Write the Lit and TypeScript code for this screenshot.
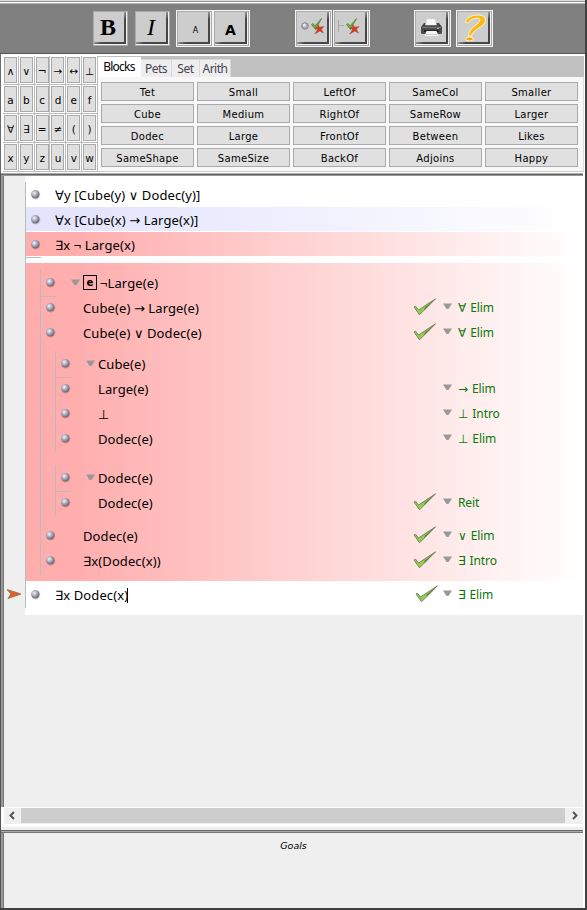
import { LitElement, html, css, svg, nothing } from "lit";
import { customElement, property } from "lit/decorators.js";
import { classMap } from "lit/directives/class-map.js";

type Step = {
  text: string;
  rule?: string;
  ok?: boolean;
  tint?: string;
  boxed?: string;
  fold?: boolean;
  caret?: boolean;
};

const SYMBOLS = ["∧", "∨", "¬", "→", "↔", "⊥", "a", "b", "c", "d", "e", "f", "∀", "∃", "=", "≠", "(", ")", "x", "y", "z", "u", "v", "w"];
const PREDICATES = [
  "Tet", "Small", "LeftOf", "SameCol", "Smaller",
  "Cube", "Medium", "RightOf", "SameRow", "Larger",
  "Dodec", "Large", "FrontOf", "Between", "Likes",
  "SameShape", "SameSize", "BackOf", "Adjoins", "Happy",
];

const verdict = svg`
  <path d="M14.500 12.500l1.500-1 2 2.500 6.500-7.500-6 11z" fill="#6cb832" stroke="#57803f" stroke-width=".8"/>
  <path d="M20.500 12.500l2.300 2.700 4.200-.7-2.600 2.800 2 3.700-3.600-2-5 3 2.700-4.300-2.500-2 3-.2z" fill="#d8371c" stroke="#9b4a3c" stroke-width=".5"/>`;

@customElement("tool-button")
class ToolButton extends LitElement {
  @property() icon = "";
  @property({ type: Boolean, reflect: true }) framed = false;
  static styles = css`
    :host { display: block; box-sizing: border-box; width: 35px; height: 35px; border: 1px solid #aaa; background: #e4e4e4; }
    :host([framed]) { width: 37px; height: 37px; border: 1px solid #f4f4f4; background: #aaa; padding: 1px; }
    .rim { box-sizing: border-box; width: 33px; height: 33px; padding: 0 1px 1px 0; background: #f0f0f0; }
    .shade { width: 32px; height: 32px; box-sizing: border-box; padding: 0 2px 2px 0; background: linear-gradient(135deg, #aaa 45%, #484848 60%, #444); }
    .face { width: 30px; height: 30px; background: #cdcdcd; display: flex; align-items: center; justify-content: center; overflow: hidden; color: #000; }
    .b { font: bold 24px "Liberation Serif", serif; padding-right: 2px; }
    .i { font: italic 24px "Liberation Serif", serif; }
    .s { font: 8px "DejaVu Sans", sans-serif; padding: 7px 0 0 5px; }
    .l { font: bold 14px "DejaVu Sans", sans-serif; padding: 6px 0 0 1px; }
    svg { display: block; }
  `;
  glyph() {
    switch (this.icon) {
      case "bold": return html`<span class="b">B</span>`;
      case "italic": return html`<span class="i">I</span>`;
      case "smaller": return html`<span class="s">A</span>`;
      case "larger": return html`<span class="l">A</span>`;
      case "step":
        return html`<svg width="30" height="30" viewBox="0 0 30 30">
          <circle cx="8" cy="14" r="3.300" fill="#a9abc0" stroke="#77777f" stroke-width=".8"/><circle cx="7.300" cy="13" r="1.500" fill="#eef"/>
          ${verdict}</svg>`;
      case "proof":
        return html`<svg width="30" height="30" viewBox="0 0 30 30">
          <path d="M3.500 8v12M4 13.500h5" stroke="#aaa" fill="none"/><g transform="translate(-3 0)">${verdict}</g></svg>`;
      case "print":
        return html`<svg width="30" height="30" viewBox="0 0 30 30">
          <path d="M8 11h15l3 4v6q0 1-2 1H7q-2 0-2-1v-6z" fill="#4a4a4a"/>
          <path d="M11 7h8l1.500 6h-11z" fill="#fafafa" stroke="#ddd" stroke-width=".5"/>
          <path d="M6 15.500h19" stroke="#777"/><path d="M8 18h15v2H8z" fill="#222"/>
          <path d="M10.500 19h10l2 5h-14z" fill="#f4f4f4"/><path d="M10 22.500h11" stroke="#ccc"/>
          <rect x="21" y="16" width="2" height="1" fill="#7bd14b"/></svg>`;
      default:
        return html`<svg width="30" height="30" viewBox="0 0 30 30">
          <path d="M7 10C9 5 15 3 20 3c6 0 8.500 3 7 7-2 6-12 7-13.500 14h-3C10.500 15 21 13 22 8 22.500 5 13 6 9.500 11z" fill="#fdb913" stroke="#fff3d0" stroke-width="1"/>
          <ellipse cx="11.500" cy="27" rx="3.800" ry="2" fill="#f9a70c" stroke="#fff3d0"/></svg>`;
    }
  }
  render() {
    return html`<div class="rim"><div class="shade"><div class="face">${this.glyph()}</div></div></div>`;
  }
}

@customElement("proof-step")
class ProofStep extends LitElement {
  @property({ attribute: false }) step: Step = { text: "" };
  static styles = css`
    :host { display: block; height: 25px; }
    .row { display: flex; height: 25px; box-sizing: border-box; }
    .lavender { background: linear-gradient(90deg, #e4e4fd 10%, #fff 100%) 0 0 / 100% 24px no-repeat; }
    .red { background: linear-gradient(90deg, #ffadad 8%, #fff 100%) 0 0 / 100% 24px no-repeat; }
    .ball { width: 11px; height: 11px; margin: 6.500px 0 0 4px; flex: none; }
    .body { display: flex; height: 25px; align-items: center; margin-left: 14px; padding-top: 2px; box-sizing: border-box; white-space: pre;
      font: 13px/25px "Noto Sans", "DejaVu Sans", sans-serif; letter-spacing: .1px; color: #000; }
    .indent { margin-left: 27px; }
    .fold { margin-left: 15px; }
    .tri { width: 9px; height: 6px; flex: none; margin-right: 3px; margin-top: -4px; }
    .box { box-sizing: border-box; width: 14px; height: 15px; border: 1px solid #000; font: bold 10px/13px "DejaVu Sans", sans-serif; text-align: center; margin-right: 3px; margin-top: -2px; }
    .caret { width: 1px; height: 15px; background: #000; margin-left: -1px; }
    .why { display: flex; width: 170px; flex: none; margin-left: auto; font: 12px/25px "Noto Sans", "DejaVu Sans", sans-serif; letter-spacing: -.1px; word-spacing: 1px; color: #087808; white-space: pre; }
    .tick { width: 24px; height: 18px; margin: 3px 6px 0 0; flex: none; }
    .final .tick { margin: 3px 4px 0 2px; }
    .why .tri { margin: 8px 6px 0 0; }
  `;
  render() {
    const s = this.step;
    const tri = html`<svg class="tri" viewBox="0 0 9 6"><path d="M0 .5h9L5.500 6h-2z" fill="#999"/></svg>`;
    const tags = { row: true, lavender: s.tint === "lavender", red: s.tint === "red", final: !!s.caret };
    const nested = s.tint === undefined;
    return html`<div class=${classMap(tags)}>
      <svg class="ball" viewBox="0 0 11 11">
        <defs><radialGradient id="g" cx=".38" cy=".35" r=".65"><stop offset="0" stop-color="#f4f5ff"/><stop offset=".5" stop-color="#a9aabf"/><stop offset="1" stop-color="#686470"/></radialGradient></defs>
        <circle cx="5.700" cy="6" r="4.700" fill="#000" opacity=".13"/><circle cx="5.300" cy="5.300" r="4.200" fill="url(#g)"/>
      </svg>
      <div class=${classMap({ body: true, indent: nested && !s.fold, fold: !!s.fold })}>${s.fold ? tri : nothing}${s.boxed ? html`<span class="box">${s.boxed}</span>` : nothing}<span>${s.text}</span>${s.caret ? html`<span class="caret"></span>` : nothing}</div>
      ${s.rule ? html`<div class="why">
        <svg class="tick" viewBox="0 0 24 18">${s.ok ? svg`<path d="M1 9l1.500-.8L5.500 12 22.500.8 6.500 16.800z" fill="#8fd14a" stroke="#707d62" stroke-width=".9"/><path d="M12 9.500L22.500.8 11 12.500z" fill="#5c7a40"/>` : nothing}</svg>
        ${tri}<span>${s.rule}</span></div>` : nothing}
    </div>`;
  }
}

@customElement("app-root")
class AppRoot extends LitElement {
  static styles = css`
    :host { display: flex; flex-direction: column; box-sizing: border-box; width: 587px; height: 910px; overflow: hidden;
      background: #fff; border-right: 2px solid #404040; border-bottom: 2px solid #404040; font-family: "DejaVu Sans", sans-serif; color: #000; }
    .bar { flex: none; height: 54px; box-sizing: border-box; border-bottom: 1px solid #555; display: flex; padding: 10px 0 0 93px; align-items: flex-start;
      background: linear-gradient(#ddd 0 1px, #929892 1px 2px, #fff 2px 3px, #b5b5b5 3px 4px, #808080 4px); }
    .plain { margin-top: 1px; }
    .g7 { margin-left: 7px; } .g6 { margin-left: 6px; } .g1 { margin-left: 1px; } .g5 { margin-left: 5px; }
    .far { margin-left: 45px; } .mid { margin-left: 44px; }
    .palette { flex: none; height: 119px; display: flex; border-left: 1px solid #6c6c6c; box-sizing: border-box; padding: 2px 2px 0 2px; }
    .keys { width: 95px; display: grid; grid-template-columns: repeat(6, 15.83px); grid-template-rows: repeat(4, 29px); background: #fff; }
    .cell { border-right: 1px solid #bbb; border-bottom: 1px solid #bbb; box-sizing: border-box; padding: 1px; }
    .key { height: 26px; width: 13px; box-sizing: border-box; border: 1px solid #aaa; background: #e0e0e0; font-size: 10.500px; line-height: 26px; display: flex; justify-content: center; }
    .tabs { flex: 1; display: flex; flex-direction: column; }
    .strip { height: 21px; background: #c0c0c0; display: flex; align-items: flex-end; font: 12px/18px "Noto Sans", sans-serif; letter-spacing: -.5px; }
    .tab { box-sizing: border-box; height: 18px; border: 1px solid #d8d8d8; border-width: 1px 1px 0 0; background: #eee; color: #445; text-align: center; }
    .on { width: 43px; height: 20px; background: #fff; color: #000; border-color: #fff; line-height: 18px; letter-spacing: -.8px; }
    .t1 { width: 31px; } .t2 { width: 28px; } .t3 { width: 31px; }
    .preds { padding: 5px 5px 0 3px; height: 95px; box-sizing: border-box; display: grid; grid-template-columns: repeat(5, 93px); grid-auto-rows: 19px; gap: 3px; background: #f8f8f8; border-right: 1px solid #ddd; border-bottom: 1px solid #ccc; }
    .pred { box-sizing: border-box; border: 1px solid #aaa; background: #e0e0e0; font-size: 10px; line-height: 20px; letter-spacing: .3px; text-align: center; }
    .pane { flex: none; height: 651px; box-sizing: border-box; display: flex; flex-direction: column; border-left: 1px solid #555; padding: 0 2px 0 0; }
    .edge { flex: none; height: 3px; background: linear-gradient(#aaa 0 1px, #666 1px 2px, #999 2px 3px); }
    .sheet { flex: 1; display: flex; border-left: 1px solid #777; box-shadow: -2px 0 0 #999; margin-left: 2px; background: #efefef; }
    .gutter { width: 21px; flex: none; display: flex; flex-direction: column; }
    .arrow { width: 15px; height: 12px; margin: 412px 0 0 3px; }
    .page { width: 558px; height: 439px; padding-top: 6px; box-sizing: border-box; background: #fff; }
    .proof { height: 426px; border-left: 1px solid #bbb; box-sizing: border-box; }
    .cut { width: 15px; height: 1px; background: #bbb; margin-bottom: -1px; position: relative; }
    .tinted { margin-top: 6px; padding: 6px 0 6px 14px; height: 318px; box-sizing: border-box; background: linear-gradient(90deg, #ffadad 8%, #fff 100%); }
    .sub { border-left: 1px solid #bbb; }
    .sub .cut { top: 1px; }
    .outer { height: 306px; box-sizing: border-box; padding-top: 1px; margin-bottom: 6px; }
    .inner { margin: 6px 0 0 14px; padding-bottom: 1px; }
    .second { margin: 13px 0 7px 14px; padding-bottom: 1px; }
    .last { margin-top: 1px; }
    .scroll { flex: none; height: 17px; box-sizing: border-box; margin-left: 3px; border-top: 1px solid #fff; display: flex; background: #f0f0f0; padding-bottom: 1px; }
    .thumb { flex: 1; background: #cdcdcd; }
    .end { width: 17px; height: 15px; }
    .end.r { width: 18px; }
    .goals { flex: 1; border-left: 1px solid #555; padding-right: 2px; display: flex; flex-direction: column; }
    .gedge { height: 9px; flex: none; background: linear-gradient(#fff 0 3px, #eee 3px 6px, #666 6px 7px, #aaa 7px 8px, #777 8px); }
    .gbody { flex: 1; margin-left: 2px; border-left: 1px solid #777; box-shadow: -2px 0 0 #999; background: #efefef; font-size: 9.500px; font-style: italic; text-align: center; padding-top: 7px; }
  `;
  step(s: Step) { return html`<proof-step .step=${s}></proof-step>`; }
  render() {
    return html`
      <div class="bar">
        <tool-button class="plain" icon="bold"></tool-button>
        <tool-button class="plain g7" icon="italic"></tool-button>
        <tool-button class="g6" framed icon="smaller"></tool-button>
        <tool-button framed icon="larger"></tool-button>
        <tool-button class="far" framed icon="step"></tool-button>
        <tool-button class="g1" framed icon="proof"></tool-button>
        <tool-button class="mid" framed icon="print"></tool-button>
        <tool-button class="g5" framed icon="help"></tool-button>
      </div>
      <div class="palette">
        <div class="keys">${SYMBOLS.map((k) => html`<div class="cell"><div class="key">${k}</div></div>`)}</div>
        <div class="tabs">
          <div class="strip"><div class="tab on">Blocks</div><div class="tab t1">Pets</div><div class="tab t2">Set</div><div class="tab t3">Arith</div></div>
          <div class="preds">${PREDICATES.map((p) => html`<div class="pred">${p}</div>`)}</div>
        </div>
      </div>
      <div class="pane">
        <div class="edge"></div>
        <div class="sheet">
          <div class="gutter"><svg class="arrow" viewBox="0 0 15 12"><path d="M0 1.500L14 6 1 10.500 4 6z" fill="#ee5a1c" stroke="#98705c" stroke-width=".9"/></svg></div>
          <div class="page"><div class="proof">
            ${this.step({ text: "∀y [Cube(y) ∨ Dodec(y)]", tint: "none" })}
            ${this.step({ text: "∀x [Cube(x) → Large(x)]", tint: "lavender" })}
            ${this.step({ text: "∃x ¬ Large(x)", tint: "red" })}
            <div class="cut"></div>
            <div class="tinted"><div class="sub outer">
              ${this.step({ text: "¬Large(e)", boxed: "e", fold: true })}
              <div class="cut"></div>
              ${this.step({ text: "Cube(e) → Large(e)", rule: "∀ Elim", ok: true })}
              ${this.step({ text: "Cube(e) ∨ Dodec(e)", rule: "∀ Elim", ok: true })}
              <div class="sub inner">
                ${this.step({ text: "Cube(e)", fold: true })}
                <div class="cut"></div>
                ${this.step({ text: "Large(e)", rule: "→ Elim" })}
                ${this.step({ text: "⊥", rule: "⊥ Intro" })}
                ${this.step({ text: "Dodec(e)", rule: "⊥ Elim" })}
              </div>
              <div class="sub second">
                ${this.step({ text: "Dodec(e)", fold: true })}
                <div class="cut"></div>
                ${this.step({ text: "Dodec(e)", rule: "Reit", ok: true })}
              </div>
              ${this.step({ text: "Dodec(e)", rule: "∨ Elim", ok: true })}
              ${this.step({ text: "∃x(Dodec(x))", rule: "∃ Intro", ok: true })}
            </div></div>
            <div class="last">${this.step({ text: "∃x Dodec(x)", rule: "∃ Elim", ok: true, caret: true, tint: "none" })}</div>
          </div></div>
        </div>
        <div class="scroll">
          <svg class="end" viewBox="0 0 17 15"><path d="M10 4L6.500 7.500 10 11" fill="none" stroke="#555" stroke-width="2"/></svg>
          <div class="thumb"></div>
          <svg class="end r" viewBox="0 0 18 15"><path d="M8 4l3.500 3.500L8 11" fill="none" stroke="#555" stroke-width="2"/></svg>
        </div>
      </div>
      <div class="goals"><div class="gedge"></div><div class="gbody">Goals</div></div>
    `;
  }
}
